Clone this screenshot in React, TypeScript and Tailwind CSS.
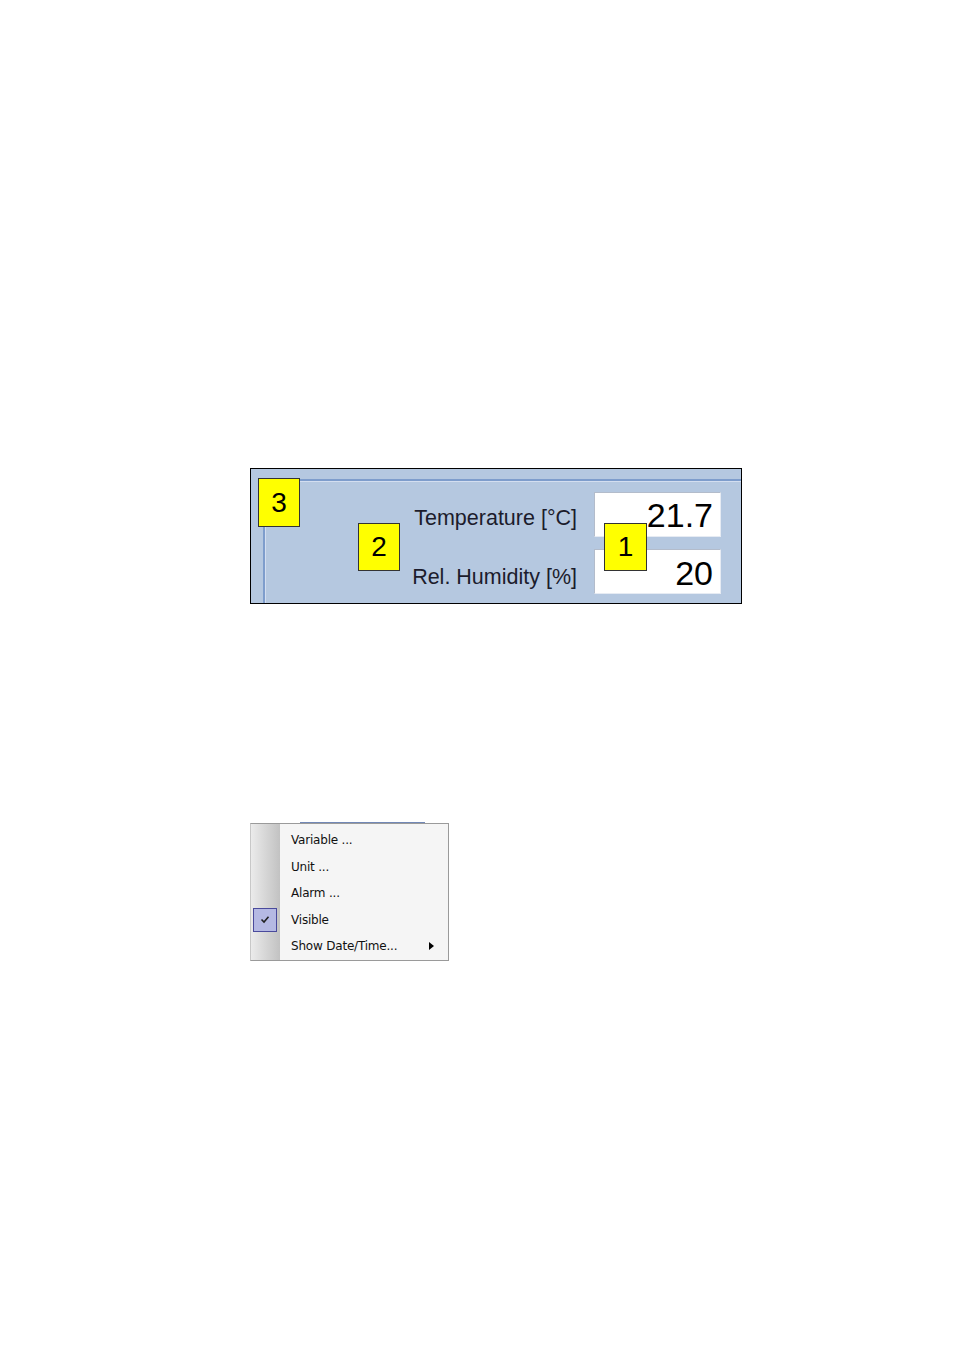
import React from "react";

const arial = { fontFamily: '"Liberation Sans", Arial, sans-serif' };

function Marker({ n, cls }: { n: string; cls: string }) {
  return (
    <div
      className={`absolute flex items-center justify-center bg-[#ffff00] border-[1.5px] border-[#333333] text-[28px] leading-none text-black ${cls}`}
      style={arial}
    >
      {n}
    </div>
  );
}

function Row({ label, value, labelCls, valueCls }: { label: string; value: string; labelCls: string; valueCls: string }) {
  return (
    <div className="flex items-start justify-end gap-[17px]">
      <div className={`text-[21.5px] leading-none text-[#1c1c2c] ${labelCls}`} style={arial}>
        {label}
      </div>
      <div
        className={`w-[127px] h-[45px] bg-white border border-t-[#b3bccb] border-l-[#b3bccb] border-r-[#e6ebf3] border-b-[#e6ebf3] flex items-center justify-end pr-[7px] text-[34px] leading-none text-black ${valueCls}`}
        style={arial}
      >
        {value}
      </div>
    </div>
  );
}

function MenuItem({ label, checked, arrow }: { label: string; checked?: boolean; arrow?: boolean }) {
  return (
    <div className="flex h-[26.5px] items-center">
      <div className="w-[29px] h-full flex items-center justify-start pl-[2px]">
        {checked && (
          <div className="w-[24px] h-[24px] border border-[#4a4a9c] bg-[#b5b9e3] flex items-center justify-center">
            <svg width="10" height="9" viewBox="0 0 10 9">
              <path d="M1.5 4.5 L4 7 L8.5 1.8" fill="none" stroke="#222" strokeWidth="1.6" />
            </svg>
          </div>
        )}
      </div>
      <div className="flex-1 flex items-center pl-[11px] pr-[14px]">
        <span className="flex-1 text-[12px] text-[#111] tracking-[-0.2px]" style={{ fontFamily: '"DejaVu Sans", Verdana, sans-serif' }}>
          {label}
        </span>
        {arrow && (
          <svg width="5" height="8" viewBox="0 0 5 8">
            <path d="M0 0 L5 4 L0 8 Z" fill="#000" />
          </svg>
        )}
      </div>
    </div>
  );
}

export default function App() {
  return (
    <div className="w-[954px] h-[1350px] bg-white flex flex-col pt-[468px] pl-[250px]">
      <div className="relative w-[492px] h-[136px] border border-black bg-[#b5c8e0] flex flex-col">
        <div className="flex-1 mt-[10px] ml-[12px] border-t-2 border-l-2 border-[#7e9dcc] flex flex-col">
          <div className="flex-1 border-t border-l border-[#d3def0] flex flex-col gap-[12px] pt-[10px] pr-[20px]">
            <Row label="Temperature [°C]" value="21.7" labelCls="pt-[16px]" valueCls="pt-[1px]" />
            <Row label="Rel. Humidity [%]" value="20" labelCls="pt-[18px]" valueCls="pt-[2px]" />
          </div>
        </div>
        <Marker n="3" cls="left-[7px] top-[9px] w-[42px] h-[49px]" />
        <Marker n="2" cls="left-[107px] top-[54px] w-[42px] h-[48px]" />
        <Marker n="1" cls="left-[353px] top-[54px] w-[43px] h-[48px]" />
      </div>

      <div className="mt-[218px] ml-[50px] w-[125px] h-[1px] bg-[#7288b6]" />
      <div className="w-[199px] h-[138px] border border-[#9a9a9a] border-l-[#c8c8c8] bg-[#f5f5f5] flex">
        <div className="flex flex-col w-full relative">
          <div className="absolute left-0 top-0 bottom-0 w-[29px] bg-gradient-to-r from-[#ebebeb] to-[#c2c2c2]" />
          <div className="relative flex flex-col pt-[3px]">
            <MenuItem label="Variable ..." />
            <MenuItem label="Unit ..." />
            <MenuItem label="Alarm ..." />
            <MenuItem label="Visible" checked />
            <MenuItem label="Show Date/Time..." arrow />
          </div>
        </div>
      </div>
    </div>
  );
}
